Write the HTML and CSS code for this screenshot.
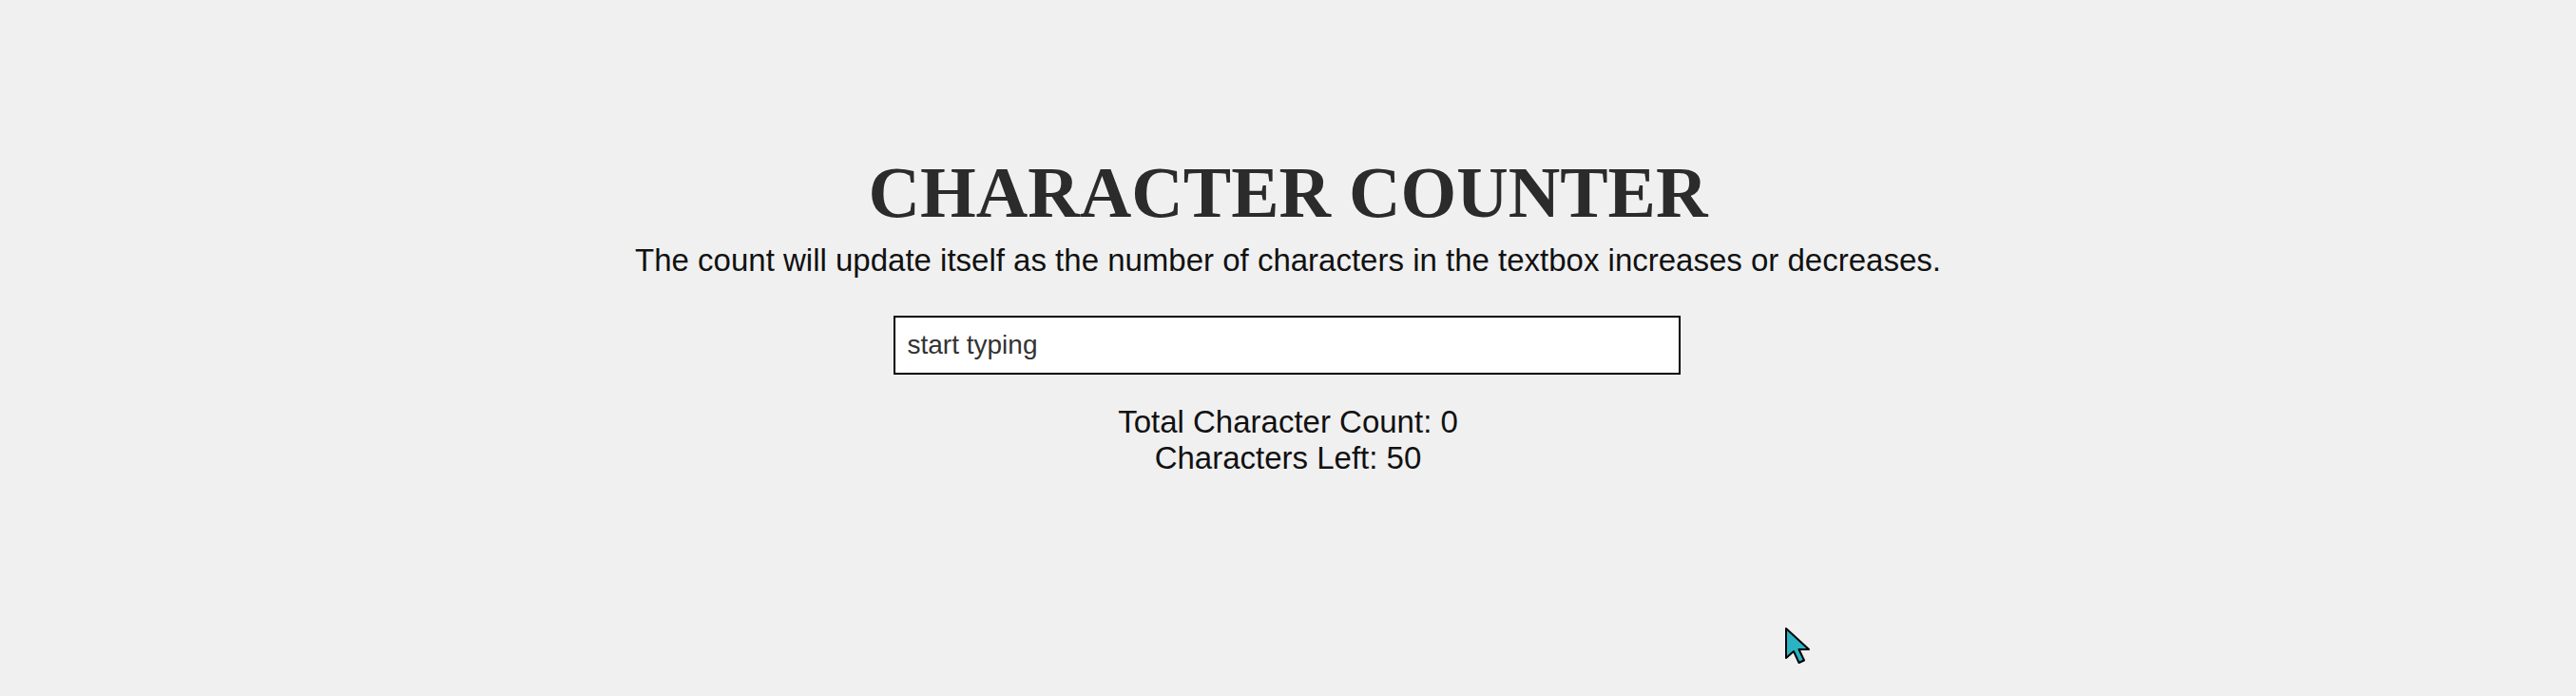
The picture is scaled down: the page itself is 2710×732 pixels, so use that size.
FILE: index.html
```html
<!DOCTYPE html>
<html lang="en">
<head>
<meta charset="utf-8">
<title>Character Counter</title>
<link rel="stylesheet" href="styles.css">
</head>
<body>
<main class="app">
  <h1 class="title">CHARACTER COUNTER</h1>
  <p class="subtitle">The count will update itself as the number of characters in the textbox increases or decreases.</p>
  <input class="textbox" type="text" placeholder="start typing" maxlength="50">
  <div class="counts">
    <div class="count-line">Total Character Count: <span class="total">0</span></div>
    <div class="count-line">Characters Left: <span class="left">50</span></div>
  </div>
</main>
<svg class="cursor" width="32" height="42" viewBox="0 0 32 42" aria-hidden="true">
  <path d="M2 2 L2 33 L10 26 L15.5 38 L21 35.5 L15.5 24 L26 24 Z" fill="#2bb3c3" stroke="#000" stroke-width="2" stroke-linejoin="round"/>
</svg>
</body>
</html>
```
FILE: styles.css
```css
html, body {
  margin: 0;
  padding: 0;
  background: #f0f0f0;
}
body {
  min-height: 732px;
  position: relative;
  overflow: hidden;
}
.app {
  display: flex;
  flex-direction: column;
  align-items: center;
  padding-top: 160px;
  font-family: "Liberation Sans", Arial, sans-serif;
  color: #111;
}
.title {
  margin: 0;
  font-family: "Liberation Serif", "Times New Roman", serif;
  font-weight: bold;
  font-size: 75.5px;
  line-height: 86px;
  color: #2b2b2b;
}
.subtitle {
  margin: 9px 0 0;
  font-size: 33px;
  line-height: 38px;
}
.textbox {
  margin-top: 39px;
  margin-right: 3px;
  box-sizing: border-box;
  width: 828px;
  height: 62px;
  border: 2px solid #000;
  background: #fff;
  padding: 0 13px;
  font-family: "Liberation Sans", Arial, sans-serif;
  font-size: 28px;
  color: #222;
  outline: none;
}
.textbox::placeholder {
  color: #333;
  opacity: 1;
}
.counts {
  margin-top: 31px;
  display: flex;
  flex-direction: column;
  align-items: center;
  font-size: 33px;
  line-height: 38px;
}
.cursor {
  position: absolute;
  left: 1877px;
  top: 659px;
}
```
